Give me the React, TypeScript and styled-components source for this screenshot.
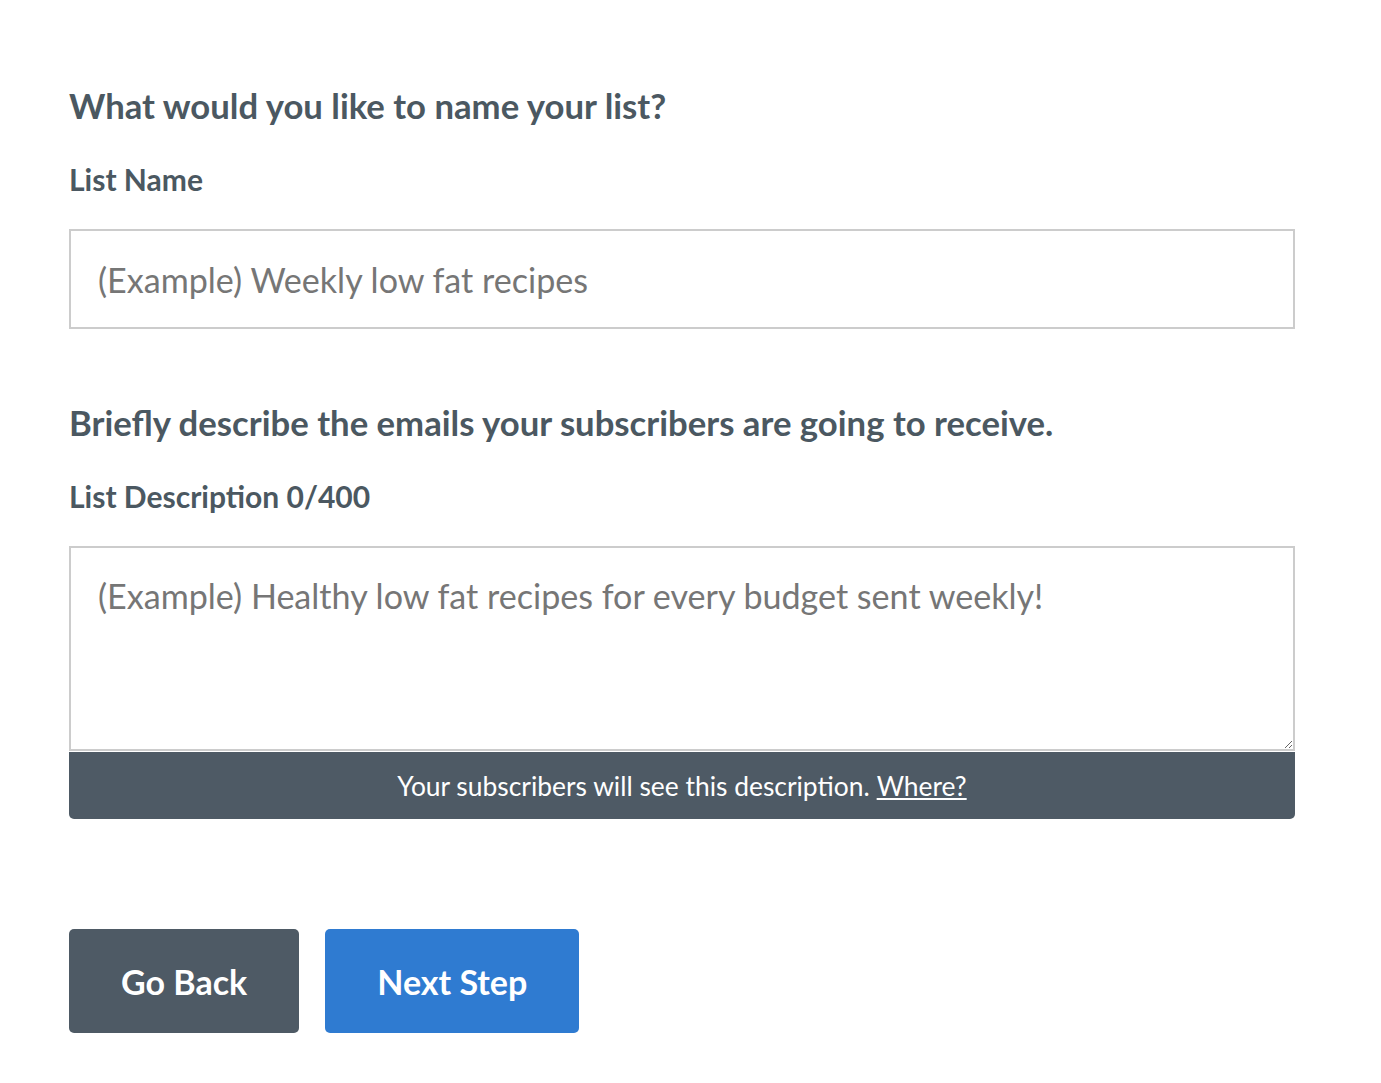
import React from 'react';
import styled, { createGlobalStyle } from 'styled-components';

const GlobalStyle = createGlobalStyle`
  body {
    margin: 0;
    background: #ffffff;
    font-family: Lato, "Open Sans", sans-serif;
  }
`;

const Page = styled.div`
  padding: 84px 86px 40px 69px;
  width: 1226px;
`;

const Question = styled.h2`
  margin: 0;
  font-size: 34.7px;
  line-height: 44px;
  font-weight: 700;
  color: #4b5861;
`;

const FieldLabel = styled.label`
  display: block;
  margin: 33px 0 32px;
  font-size: 30px;
  line-height: 36px;
  font-weight: 700;
  color: #4b5861;
`;

const TextInput = styled.input`
  display: block;
  box-sizing: border-box;
  width: 100%;
  height: 100px;
  margin: 0 0 72px;
  padding: 0 27px;
  border: 2px solid #cccccc;
  font-family: inherit;
  font-size: 34.1px;
  color: #333;
  outline: none;

  &::placeholder {
    color: #767676;
  }
`;

const TextArea = styled.textarea`
  display: block;
  box-sizing: border-box;
  width: 100%;
  height: 205px;
  margin: 0;
  padding: 26px 27px;
  border: 2px solid #cccccc;
  font-family: inherit;
  font-size: 34.1px;
  line-height: 44px;
  color: #333;
  outline: none;
  resize: vertical;

  &::placeholder {
    color: #767676;
  }
`;

const NoteBar = styled.div`
  display: flex;
  align-items: center;
  justify-content: center;
  height: 67px;
  margin-top: 1px;
  border-radius: 0 0 5px 5px;
  background: #4e5a65;
  color: #ffffff;
  font-size: 26.4px;
`;

const NoteLink = styled.a`
  margin-left: 7px;
  color: #ffffff;
  text-decoration: underline;
  cursor: pointer;
`;

const Actions = styled.div`
  display: flex;
  gap: 26px;
  margin-top: 110px;
`;

const Button = styled.button<{ $primary?: boolean }>`
  height: 104px;
  padding: 0 52px;
  border: none;
  border-radius: 5px;
  background: ${(p) => (p.$primary ? '#2f7bd1' : '#4e5a65')};
  color: #ffffff;
  font-family: inherit;
  font-size: 34px;
  font-weight: 700;
  cursor: pointer;
`;

export default function App() {
  return (
    <>
      <GlobalStyle />
      <Page>
        <Question>What would you like to name your list?</Question>
        <FieldLabel htmlFor="list-name">List Name</FieldLabel>
        <TextInput id="list-name" placeholder="(Example) Weekly low fat recipes" />

        <Question>Briefly describe the emails your subscribers are going to receive.</Question>
        <FieldLabel htmlFor="list-desc">List Description 0/400</FieldLabel>
        <TextArea
          id="list-desc"
          placeholder="(Example) Healthy low fat recipes for every budget sent weekly!"
        />
        <NoteBar>
          Your subscribers will see this description. <NoteLink>Where?</NoteLink>
        </NoteBar>

        <Actions>
          <Button>Go Back</Button>
          <Button $primary>Next Step</Button>
        </Actions>
      </Page>
    </>
  );
}
